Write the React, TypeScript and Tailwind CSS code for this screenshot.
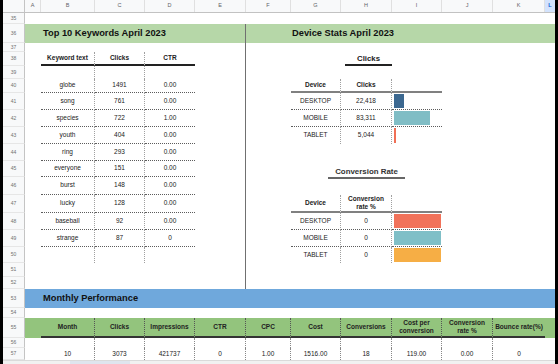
import React from "react";

const G =
  "grid grid-cols-[22px_16px_54px_50px_50px_51px_45px_50px_51px_50px_51px_52px_10px] shrink-0";

function Row({ h, n, children }: { h: string; n: number; children?: React.ReactNode }) {
  return (
    <div className={`${G} ${h}`}>
      <div className="col-start-1 bg-[#f8f9fa] border-r border-b border-r-[#c4c4c4] border-b-[#e6e6e6] flex items-center justify-center text-[5px] text-[#707070]">
        {n}
      </div>
      {children}
    </div>
  );
}

const Divider = () => <div className="col-start-6 border-r border-r-[#707070]" />;

const cellKw =
  "flex items-center justify-center border-r border-b border-dotted border-r-[#a0a0a0] border-b-[#5c5c5c]";
const cellKwLast = "flex items-center justify-center border-b border-dotted border-b-[#5c5c5c]";

function KwRow({ k, c, t }: { k: string; c: string; t: string }) {
  return (
    <>
      <div className={`col-start-3 ${cellKw}`}>{k}</div>
      <div className={`col-start-4 ${cellKw}`}>{c}</div>
      <div className={`col-start-5 ${cellKwLast}`}>{t}</div>
      <Divider />
    </>
  );
}

function KwEmpty() {
  return (
    <>
      <div className="col-start-3 border-r border-dotted border-r-[#a0a0a0]" />
      <div className="col-start-4 border-r border-dotted border-r-[#a0a0a0]" />
      <Divider />
    </>
  );
}

const MAXCLICK = 83311;

function DevRow({
  name,
  val,
  last,
  bar,
  full,
}: {
  name: string;
  val: string;
  last?: boolean;
  bar: string;
  full?: boolean;
}) {
  const side = last
    ? "flex items-center justify-center border-r border-dotted border-r-[#a0a0a0]"
    : "flex items-center justify-center border-r border-b border-dotted border-r-[#a0a0a0] border-b-[#5c5c5c]";
  const barCell = last
    ? "flex pt-[1px] pb-[1px] pl-[2px] pr-[1px]"
    : "flex pt-[1px] pb-[1px] pl-[2px] pr-[1px] border-b border-dotted border-b-[#5c5c5c]";
  const num = Number(val.replace(/,/g, ""));
  const w = full ? undefined : Math.max(2, Math.round((num / MAXCLICK) * 36));
  return (
    <>
      <div className={`col-start-8 ${side}`}>{name}</div>
      <div className={`col-start-9 ${side}`}>{val}</div>
      <div className={`col-start-10 ${barCell}`}>
        <div className={full ? `flex-1 ${bar}` : bar} style={w ? { width: w } : undefined} />
      </div>
    </>
  );
}

const hdrSide =
  "flex items-center justify-center font-bold border-r border-dotted border-r-[#a0a0a0] border-b-2 border-b-[#808080] [border-bottom-style:solid]!";

const monthHeads: (string | string[])[] = [
  "Month",
  "Clicks",
  "Impressions",
  "CTR",
  "CPC",
  "Cost",
  "Conversions",
  ["Cost per", "conversion"],
  ["Conversion", "rate %"],
  "Bounce rate(%)",
];
const monthVals = ["10", "3073", "421737", "0", "1.00", "1516.00", "18", "119.00", "0.00", "0"];

export default function App() {
  return (
    <div className="w-[558px] h-[364px] bg-black flex overflow-hidden font-['Liberation_Sans',Arial,sans-serif] text-[6.5px] leading-none text-[#222]">
      <div className="ml-[3px] w-[552px] h-full bg-white flex flex-col overflow-hidden">
        {/* column letters */}
        <div className={`${G} h-[13px] border-b border-b-[#c2c2c2]`}>
          <div className="bg-[#f8f9fa] border-r border-r-[#c4c4c4]" />
          {["A", "B", "C", "D", "E", "F", "G", "H", "I", "J", "K"].map((l) => (
            <div
              key={l}
              className="bg-[#f8f9fa] border-r border-r-[#e0e0e0] flex items-center justify-center text-[5.5px] text-[#5f6368]"
            >
              {l}
            </div>
          ))}
          <div className="bg-[#d3e3fd] flex items-center justify-center text-[5.5px] font-bold text-[#0b57d0]">L</div>
        </div>

        <Row h="h-[11px]" n={35} />
        <Row h="h-[19px]" n={36}>
          <div className="col-start-2 col-span-5 bg-[#b6d7a8] border-r border-r-[#707070] flex items-center pl-[18px] text-[9.3px] font-bold text-[#111]">
            Top 10 Keywords April 2023
          </div>
          <div className="col-start-7 col-span-7 bg-[#b6d7a8] flex items-center pl-[46px] text-[9.3px] font-bold text-[#111]">
            Device Stats April 2023
          </div>
        </Row>
        <Row h="h-[9px]" n={37}>
          <Divider />
        </Row>
        <Row h="h-[14px]" n={38}>
          <div className="col-start-3 flex items-center justify-center font-bold border-r border-dotted border-r-[#a0a0a0] border-b-2 border-b-[#222] [border-bottom-style:solid]!">
            Keyword text
          </div>
          <div className="col-start-4 flex items-center justify-center font-bold border-r border-dotted border-r-[#a0a0a0] border-b-2 border-b-[#222] [border-bottom-style:solid]!">
            Clicks
          </div>
          <div className="col-start-5 flex items-center justify-center font-bold border-b-2 border-b-[#222]">CTR</div>
          <Divider />
          <div className="col-start-8 col-span-3 flex items-end justify-center">
            <span className="ml-[4px] px-[12px] pb-[1px] border-b-2 border-b-[#222] text-[7.8px] leading-[9px] font-bold text-[#1a1a1a]">
              Clicks
            </span>
          </div>
        </Row>
        <Row h="h-[13px]" n={39}>
          <KwEmpty />
        </Row>
        <Row h="h-[14px]" n={40}>
          <KwRow k="globe" c="1491" t="0.00" />
          <div className={`col-start-8 ${hdrSide}`}>Device</div>
          <div className={`col-start-9 ${hdrSide}`}>Clicks</div>
          <div className="col-start-10 border-b-2 border-b-[#808080]" />
        </Row>
        <Row h="h-[17px]" n={41}>
          <KwRow k="song" c="761" t="0.00" />
          <DevRow name="DESKTOP" val="22,418" bar="bg-[#3c6890]" />
        </Row>
        <Row h="h-[17px]" n={42}>
          <KwRow k="species" c="722" t="1.00" />
          <DevRow name="MOBILE" val="83,311" bar="bg-[#80bdc5]" />
        </Row>
        <Row h="h-[17px]" n={43}>
          <KwRow k="youth" c="404" t="0.00" />
          <DevRow name="TABLET" val="5,044" bar="bg-[#f06f55]" last />
        </Row>
        <Row h="h-[17px]" n={44}>
          <KwRow k="ring" c="293" t="0.00" />
        </Row>
        <Row h="h-[16px]" n={45}>
          <KwRow k="everyone" c="151" t="0.00" />
          <div className="col-start-8 col-span-3 flex items-end justify-center">
            <span className="-mb-[2px] px-[7px] pb-[1px] border-b-2 border-b-[#666] text-[7.9px] leading-[9px] font-bold text-[#333]">
              Conversion Rate
            </span>
          </div>
        </Row>
        <Row h="h-[18px]" n={46}>
          <KwRow k="burst" c="148" t="0.00" />
        </Row>
        <Row h="h-[18px]" n={47}>
          <KwRow k="lucky" c="128" t="0.00" />
          <div className={`col-start-8 ${hdrSide}`}>Device</div>
          <div className={`col-start-9 ${hdrSide} flex-col gap-[1px]`}>
            <span>Conversion</span>
            <span>rate %</span>
          </div>
          <div className="col-start-10 border-b-2 border-b-[#808080]" />
        </Row>
        <Row h="h-[17px]" n={48}>
          <KwRow k="baseball" c="92" t="0.00" />
          <DevRow name="DESKTOP" val="0" bar="bg-[#f1725a]" full />
        </Row>
        <Row h="h-[17px]" n={49}>
          <KwRow k="strange" c="87" t="0" />
          <DevRow name="MOBILE" val="0" bar="bg-[#7fbfc7]" full />
        </Row>
        <Row h="h-[16px]" n={50}>
          <KwEmpty />
          <DevRow name="TABLET" val="0" bar="bg-[#f6ae45]" full last />
        </Row>
        <Row h="h-[14px]" n={51}>
          <Divider />
        </Row>
        <Row h="h-[12px]" n={52}>
          <Divider />
        </Row>
        <Row h="h-[19px]" n={53}>
          <div className="col-start-2 col-span-12 bg-[#6fa8dc] flex items-center pl-[18px] text-[9.3px] font-bold text-[#111]">
            Monthly Performance
          </div>
        </Row>
        <Row h="h-[10px]" n={54} />
        <Row h="h-[20px]" n={55}>
          <div className="bg-[#93c47d]" />
          {monthHeads.map((m, i) => (
            <div
              key={i}
              className={
                i < 9
                  ? "bg-[#93c47d] flex flex-col gap-[1px] items-center justify-center text-center font-bold border-r border-dotted border-r-[#555] border-b-2 border-b-[#333] [border-bottom-style:solid]!"
                  : "bg-[#93c47d] flex flex-col items-center justify-center text-center font-bold whitespace-nowrap border-b-2 border-b-[#333]"
              }
            >
              {Array.isArray(m) ? (
                <>
                  <span>{m[0]}</span>
                  <span>{m[1]}</span>
                </>
              ) : (
                m
              )}
            </div>
          ))}
          <div className="bg-[#93c47d]" />
        </Row>
        <Row h="h-[10px]" n={56}>
          <div />
          {monthVals.map((_, i) => (
            <div key={i} className={i < 9 ? "border-r border-dotted border-r-[#888]" : ""} />
          ))}
        </Row>
        <Row h="h-[12px]" n={57}>
          <div />
          {monthVals.map((v, i) => (
            <div
              key={i}
              className={
                i < 9
                  ? "flex items-center justify-center border-r border-dotted border-r-[#888]"
                  : "flex items-center justify-center"
              }
            >
              {v}
            </div>
          ))}
        </Row>
        <div className="h-[4px] shrink-0 bg-[#f1f1f1] border-t border-t-[#dadada] flex">
          <div className="ml-[67px] w-[60px] bg-[#dfe5ee]" />
        </div>
      </div>
    </div>
  );
}
